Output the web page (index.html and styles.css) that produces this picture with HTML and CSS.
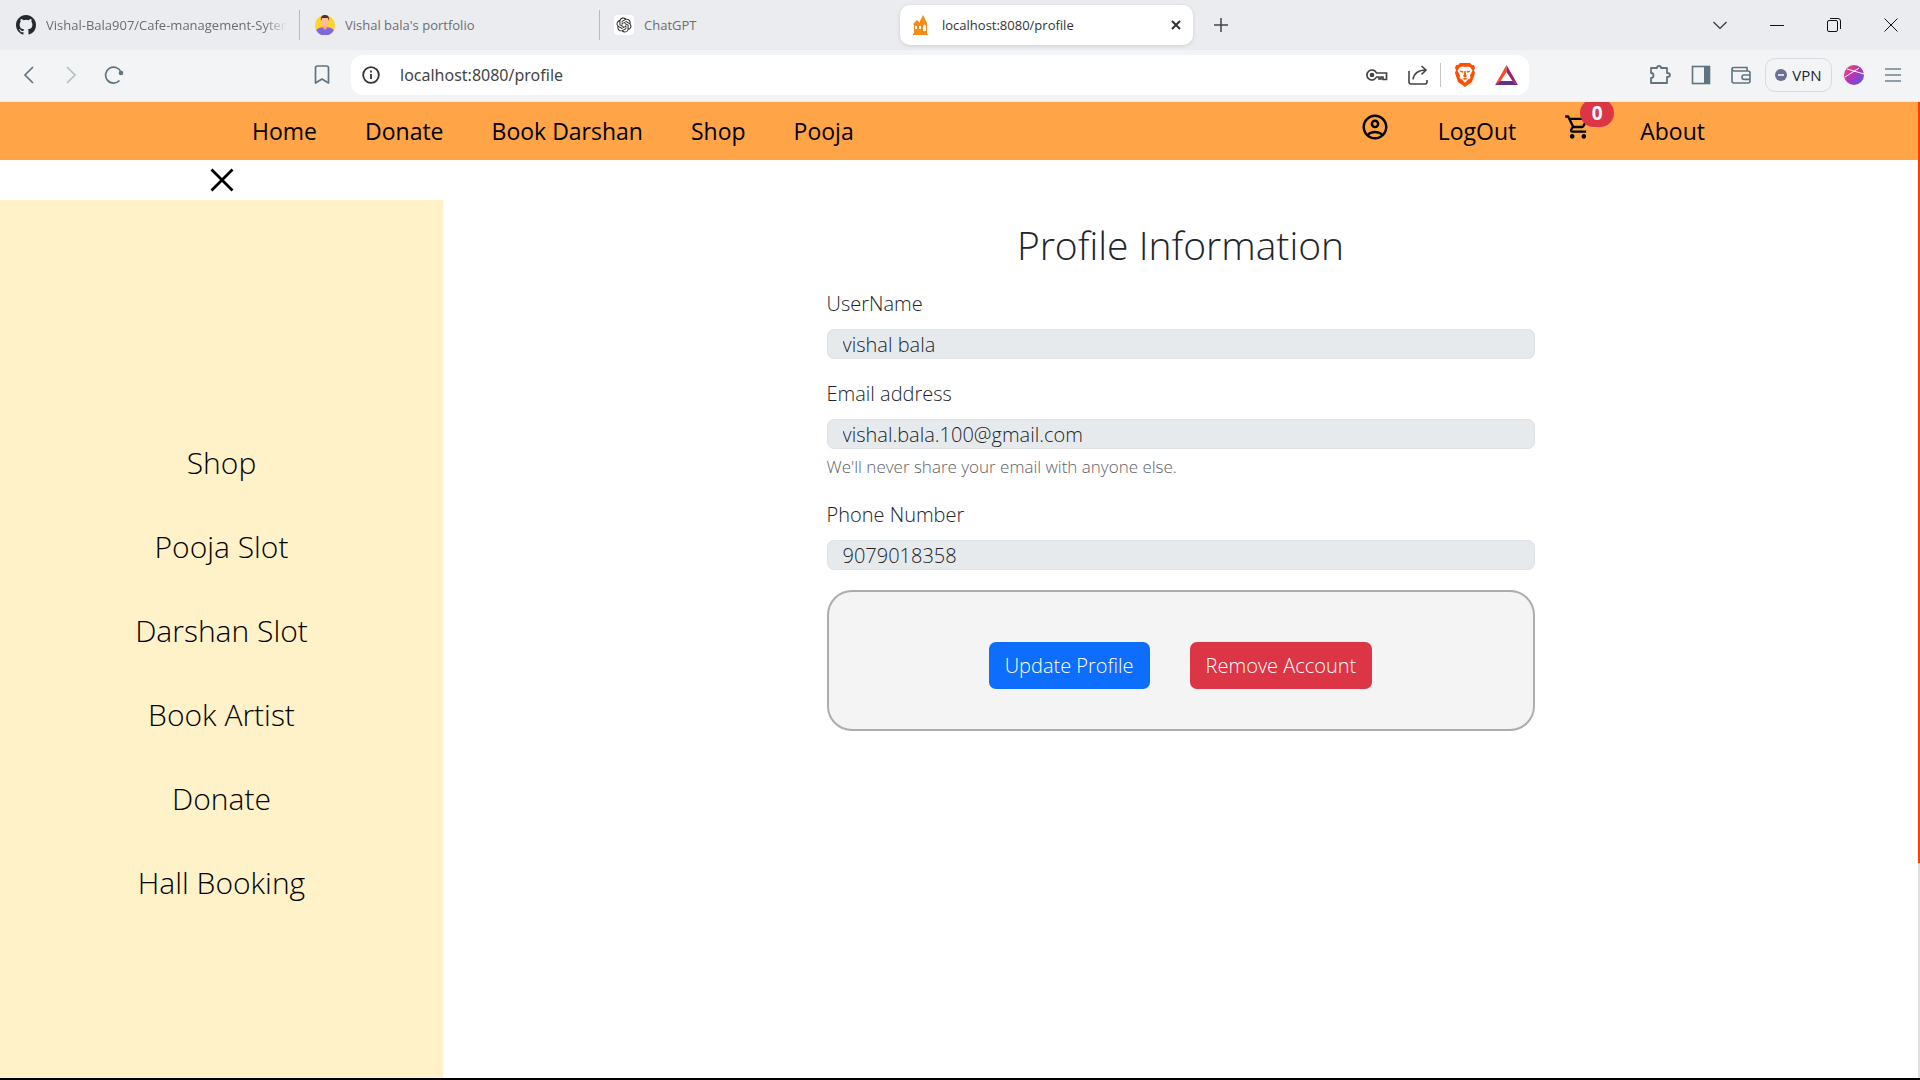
FILE: index.html
```html
<!DOCTYPE html>
<html lang="en">
<head>
<meta charset="utf-8">
<title>localhost:8080/profile</title>
<link rel="stylesheet" href="styles.css">
</head>
<body>
<div class="window">
  <header class="tabstrip">
    <div class="tab tab-clip">
      <svg class="tab-icon" viewBox="0 0 16 16"><path fill="#24292f" d="M8 0C3.58 0 0 3.58 0 8c0 3.54 2.29 6.53 5.47 7.59.4.07.55-.17.55-.38 0-.19-.01-.82-.01-1.49-2.01.37-2.53-.49-2.69-.94-.09-.23-.48-.94-.82-1.13-.28-.15-.68-.52-.01-.53.63-.01 1.08.58 1.23.82.72 1.21 1.87.87 2.33.66.07-.52.28-.87.51-1.07-1.78-.2-3.64-.89-3.64-3.95 0-.87.31-1.59.82-2.15-.08-.2-.36-1.02.08-2.12 0 0 .67-.21 2.2.82a7.4 7.4 0 0 1 4 0c1.53-1.04 2.2-.82 2.2-.82.44 1.1.16 1.92.08 2.12.51.56.82 1.27.82 2.15 0 3.07-1.87 3.75-3.65 3.95.29.25.54.73.54 1.48 0 1.07-.01 1.93-.01 2.2 0 .21.15.46.55.38A8 8 0 0 0 16 8c0-4.42-3.58-8-8-8z"/></svg>
      <span class="tab-title">Vishal-Bala907/Cafe-management-Sytem</span>
    </div>
    <div class="tab">
      <svg class="tab-icon" viewBox="0 0 20 20"><circle cx="10" cy="10" r="10" fill="#ffd32e"/><path fill="#8068d8" d="M1 15c2-2 5-3 9-3s7 1 9 3a10 10 0 0 1-18 0z"/><path fill="#f7a58a" d="M8 9h4v4l-2 2-2-2z"/><ellipse cx="10" cy="6.500" rx="3.500" ry="4.500" fill="#ffb9a0"/><path fill="#4b2e3d" d="M6 6c-1-5 2-6 4-6s5 1 4 6l-1-3H7z"/></svg>
      <span class="tab-title">Vishal bala's portfolio</span>
    </div>
    <div class="tab">
      <svg class="tab-icon" viewBox="0 0 20 20"><rect width="20" height="20" rx="4" fill="#fff"/><g transform="translate(2.500 2.500) scale(.625)"><path fill="#222" d="M22.282 9.821a5.985 5.985 0 0 0-.516-4.910 6.046 6.046 0 0 0-6.510-2.900A6.065 6.065 0 0 0 4.981 4.182a5.985 5.985 0 0 0-3.998 2.900 6.046 6.046 0 0 0 .743 7.097 5.980 5.980 0 0 0 .510 4.911 6.051 6.051 0 0 0 6.515 2.900A5.985 5.985 0 0 0 13.260 24a6.056 6.056 0 0 0 5.772-4.206 5.990 5.990 0 0 0 3.998-2.900 6.056 6.056 0 0 0-.748-7.073zM13.260 22.430a4.476 4.476 0 0 1-2.876-1.040l.141-.081 4.779-2.758a.795.795 0 0 0 .393-.681v-6.737l2.020 1.169a.071.071 0 0 1 .038.052v5.583a4.504 4.504 0 0 1-4.495 4.493zM3.600 18.304a4.471 4.471 0 0 1-.535-3.014l.142.085 4.783 2.759a.771.771 0 0 0 .780 0l5.843-3.369v2.332a.080.080 0 0 1-.033.062L9.740 19.950a4.500 4.500 0 0 1-6.140-1.646zM2.341 7.896a4.485 4.485 0 0 1 2.366-1.973V11.600a.766.766 0 0 0 .388.677l5.815 3.354-2.020 1.169a.076.076 0 0 1-.071 0l-4.830-2.787A4.504 4.504 0 0 1 2.341 7.872zm16.597 3.855-5.833-3.387L15.119 7.200a.076.076 0 0 1 .071 0l4.830 2.791a4.494 4.494 0 0 1-.676 8.105v-5.678a.790.790 0 0 0-.407-.667zm2.011-3.023-.142-.085-4.774-2.782a.776.776 0 0 0-.785 0L9.409 9.230V6.897a.066.066 0 0 1 .028-.061l4.830-2.787a4.499 4.499 0 0 1 6.680 4.660zm-12.640 4.135-2.020-1.164a.080.080 0 0 1-.038-.057V6.075a4.499 4.499 0 0 1 7.376-3.454l-.142.081-4.779 2.758a.795.795 0 0 0-.392.681zm1.097-2.365 2.602-1.500 2.607 1.500v2.999l-2.597 1.500-2.607-1.500z"/></g></svg>
      <span class="tab-title">ChatGPT</span>
    </div>
    <div class="tab tab-active">
      <svg class="tab-icon" viewBox="0 0 20 20"><path fill="#f48b16" d="M2 18v-8l-1-1 4-4 3 3V6l3-6 4 8v11h1v1H1v-1z"/><path fill="#fff" d="M3 11h2v3H3zm4 0h2v3H7zm4 0c1-2 2-2 3 0v5h-3z"/></svg>
      <span class="tab-title">localhost:8080/profile</span>
      <button class="icon-btn tab-close" aria-label="Close tab"><svg width="12" height="12" viewBox="0 0 12 12"><path d="M2 2l8 8M10 2l-8 8" stroke="#333" stroke-width="2"/></svg></button>
    </div>
    <button class="icon-btn new-tab" aria-label="New tab"><svg width="14" height="14" viewBox="0 0 14 14"><path d="M7 0v14M0 7h14" stroke="#444" stroke-width="1.500"/></svg></button>
    <div class="window-controls">
      <button class="icon-btn" aria-label="Search tabs"><svg width="14" height="14" viewBox="0 0 14 14"><path d="M.5 4 7 10.500 13.500 4" fill="none" stroke="#333" stroke-width="1.200"/></svg></button>
      <button class="icon-btn" aria-label="Minimize"><svg width="14" height="14" viewBox="0 0 14 14"><path d="M0 7.500h14" stroke="#111"/></svg></button>
      <button class="icon-btn" aria-label="Restore"><svg width="14" height="14" viewBox="0 0 14 14"><g fill="none" stroke="#111"><rect x=".5" y="2.500" width="10" height="11" rx="1.500"/><path d="M3 .5h8q2.500 0 2.500 2.500v8"/></g></svg></button>
      <button class="icon-btn" aria-label="Close window"><svg width="14" height="14" viewBox="0 0 14 14"><path d="M.5.5l13 13M13.500.5l-13 13" stroke="#111"/></svg></button>
    </div>
  </header>

  <div class="toolbar">
    <div class="toolbar-nav">
      <button class="icon-btn" aria-label="Back"><svg width="18" height="18" viewBox="0 0 18 18"><path d="M13 1 5 9l8 8" fill="none" stroke="#5f7480" stroke-width="1.700"/></svg></button>
      <button class="icon-btn" aria-label="Forward"><svg width="18" height="18" viewBox="0 0 18 18"><path d="M5 1l8 8-8 8" fill="none" stroke="#b4bfc5" stroke-width="1.700"/></svg></button>
      <button class="icon-btn" aria-label="Reload"><svg width="20" height="18" viewBox="0 0 20 18"><path d="M15.500 14.500A8 8 0 1 1 17 6" fill="none" stroke="#5f7480" stroke-width="1.700"/><circle cx="17" cy="7" r="2.300" fill="#5f7480"/></svg></button>
    </div>
    <button class="icon-btn bookmark" aria-label="Bookmark"><svg width="16" height="20" viewBox="0 0 16 20"><path d="M1.500 18V3q0-2 2-2h9q2 0 2 2v15L8 14z" fill="none" stroke="#5f7480" stroke-width="1.700" stroke-linejoin="round"/></svg></button>
    <div class="address">
      <svg width="18" height="18" viewBox="0 0 18 18"><circle cx="9" cy="9" r="7.800" fill="none" stroke="#333" stroke-width="1.800"/><path d="M9 8v5M9 4.500v2" stroke="#333" stroke-width="1.800"/></svg>
      <input class="address-input" type="text" value="localhost:8080/profile" aria-label="Address">
      <button class="icon-btn" aria-label="Passwords"><svg width="22" height="14" viewBox="0 0 22 14"><g fill="none" stroke="#444" stroke-width="1.700"><path d="M10.500 5a5 5 0 1 0 0 4H13v2h2V9h2v2.500h3.500V5z"/><circle cx="6" cy="7" r="1.500" fill="#444"/></g></svg></button>
      <button class="icon-btn share" aria-label="Share"><svg width="20" height="20" viewBox="0 0 20 20"><g fill="none" stroke="#444" stroke-width="1.600"><path d="M1 6v11q0 2 2 2h14q2 0 2-2v-2"/><path d="M5 14.500C6 8 10 5 18 5M13.500 1 18 5l-4.500 4.500"/></g></svg></button>
      <button class="icon-btn shield" aria-label="Shields"><svg width="20" height="24" viewBox="0 0 20 24"><path fill="#ff5000" d="M5 0h10l2 2 2 0 1 3-1 2 1 3-3 9-7 5-7-5L0 10l1-3-1-2 1-3 2 0z"/><path fill="#fff" d="M5 4l2.500-.5L10 4l2.500-.5L15 4l2.500 3.500-2.500 5 .5 2.500-2.500 1.500L10 20l-3-3.500L4.500 15l.5-2.500-2.500-5z"/><path fill="#ff5000" d="M4.500 7.500l4 .8-.8 1.400L5.500 9zM15.500 7.500l-4 .8.8 1.400L14.500 9zM9.300 8h1.400l.3 4 1.200 1L10 14.500 7.800 13l1.200-1zM7 16l3-1.200L13 16l-3 .800z"/></svg></button>
      <button class="icon-btn" aria-label="Rewards"><svg width="23" height="20" viewBox="0 0 23 20"><path fill="#ff4724" d="M11.500 0v7L5 17l-5 3z"/><path fill="#9e1f63" d="M11.500 0 23 20l-5.500-4-6-9z"/><path fill="#662d91" d="M0 20l5.500-4h12l5.500 4z"/></svg></button>
    </div>
    <div class="toolbar-actions">
      <button class="icon-btn" aria-label="Extensions"><svg width="22" height="22" viewBox="0 0 22 22"><path d="M2 4h6q0-2 2-2t2 2h6v5q3 0 3 2t-3 2v6H2v-5q2.500 0 2.500-2.500T2 9z" fill="none" stroke="#5f7480" stroke-width="1.800" stroke-linejoin="round"/></svg></button>
      <button class="icon-btn" aria-label="Side panel"><svg width="20" height="20" viewBox="0 0 20 20"><rect x="1.500" y="1.500" width="17" height="17" fill="none" stroke="#5f7480" stroke-width="1.600"/><path fill="#5f7480" d="M13 1h6v18h-6z"/></svg></button>
      <button class="icon-btn" aria-label="Wallet"><svg width="20" height="20" viewBox="0 0 20 20"><g fill="none" stroke="#5f7480" stroke-width="1.600"><path d="M16 6V2.500H3Q1 2.500 1 4t2 2h14q2 0 2 2v8q0 2-2 2H3q-2 0-2-2V4"/><path d="M19 10h-6q-2 0-2 2.200t2 2.200h6"/></g></svg></button>
      <button class="vpn"><svg width="12" height="12" viewBox="0 0 12 12"><circle cx="6" cy="6" r="6" fill="#6b6f92"/><path d="M3 6h6" stroke="#fff" stroke-width="1.500"/></svg>VPN</button>
      <button class="icon-btn" aria-label="Profile"><svg width="20" height="20" viewBox="0 0 20 20"><defs><linearGradient id="orb" x1="0" y1="0" x2="1" y2="1"><stop offset="0" stop-color="#ff4a6a"/><stop offset=".5" stop-color="#b136b8"/><stop offset="1" stop-color="#4a5df0"/></linearGradient></defs><circle cx="10" cy="10" r="10" fill="url(#orb)"/><path d="M3 4l17 5M1 12 15 3" stroke="#fff"/></svg></button>
      <button class="icon-btn" aria-label="Menu"><svg width="18" height="14" viewBox="0 0 18 14"><path d="M1 1h16M1 7h16M1 13h16" stroke="#70838e" stroke-width="1.500"/></svg></button>
    </div>
  </div>

  <div class="viewport">
    <div class="page">
      <nav class="navbar" aria-label="Main">
        <div class="nav-left">
          <a href="#home">Home</a>
          <a href="#donate">Donate</a>
          <a href="#darshan">Book Darshan</a>
          <a href="#shop">Shop</a>
          <a href="#pooja">Pooja</a>
        </div>
        <div class="nav-right">
          <a class="nav-icon" href="#profile" aria-label="Profile"><svg width="30" height="30" viewBox="0 0 24 24"><path d="M12 2C6.480 2 2 6.480 2 12s4.480 10 10 10 10-4.480 10-10S17.520 2 12 2zM7.350 18.500C8.660 17.560 10.260 17 12 17s3.340.56 4.650 1.500C15.340 19.440 13.740 20 12 20s-3.340-.56-4.650-1.500zm10.790-1.380C16.450 15.800 14.320 15 12 15s-4.450.8-6.140 2.120C4.700 15.730 4 13.950 4 12c0-4.420 3.580-8 8-8s8 3.580 8 8c0 1.950-.7 3.730-1.860 5.120zM12 6c-1.930 0-3.500 1.570-3.500 3.500S10.070 13 12 13s3.500-1.570 3.500-3.500S13.930 6 12 6zm0 5c-.83 0-1.500-.67-1.500-1.500S11.170 8 12 8s1.500.67 1.500 1.500S12.830 11 12 11z"/></svg></a>
          <a href="#logout">LogOut</a>
          <a class="nav-icon" href="#cart" aria-label="Cart"><svg width="28" height="28" viewBox="0 0 24 24"><path d="M15.550 13c.75 0 1.410-.41 1.750-1.030l3.580-6.490A.996.996 0 0 0 20.010 4H5.210l-.94-2H1v2h2l3.600 7.590-1.350 2.440C4.520 15.370 5.480 17 7 17h12v-2H7l1.100-2h7.450zM6.160 6h12.150l-2.760 5H8.530L6.160 6zM7 18c-1.100 0-1.990.9-1.990 2S5.900 22 7 22s2-.9 2-2-.9-2-2-2zm10 0c-1.100 0-1.990.9-1.990 2s.89 2 1.990 2 2-.9 2-2-.9-2-2-2z"/></svg><span class="badge">0</span></a>
          <a href="#about">About</a>
        </div>
      </nav>
      <div class="content">
        <aside class="side">
          <button class="icon-btn side-close" aria-label="Close menu"><svg width="24" height="24" viewBox="0 0 24 24"><path d="M1.500 1.500l21 21M22.500 1.500l-21 21" stroke="#000" stroke-width="2.800"/></svg></button>
          <nav class="side-menu" aria-label="Services">
            <a href="#shop">Shop</a>
            <a href="#pooja-slot">Pooja Slot</a>
            <a href="#darshan-slot">Darshan Slot</a>
            <a href="#artist">Book Artist</a>
            <a href="#donate">Donate</a>
            <a href="#hall">Hall Booking</a>
          </nav>
        </aside>
        <main class="main">
          <form class="profile">
            <h1>Profile Information</h1>
            <div class="field">
              <label for="username">UserName</label>
              <input id="username" type="text" value="vishal bala" readonly>
            </div>
            <div class="field">
              <label for="email">Email address</label>
              <input id="email" type="email" value="vishal.bala.100@gmail.com" aria-describedby="email-help" readonly>
              <small id="email-help">We'll never share your email with anyone else.</small>
            </div>
            <div class="field">
              <label for="phone">Phone Number</label>
              <input id="phone" type="tel" value="9079018358" readonly>
            </div>
            <div class="actions">
              <button class="btn btn-primary" type="button">Update Profile</button>
              <button class="btn btn-danger" type="button">Remove Account</button>
            </div>
          </form>
        </main>
      </div>
    </div>
    <div class="scrollbar"><div class="scroll-thumb"></div></div>
  </div>
</div>
</body>
</html>
```
FILE: styles.css
```css
* { box-sizing: border-box; }

body {
  margin: 0;
  font-family: "Open Sans", "Noto Sans", sans-serif;
  font-weight: 300;
  color: #212529;
}

a { color: inherit; text-decoration: none; }
button, input { font: inherit; color: inherit; }
svg { display: block; flex: none; }

.window {
  display: flex;
  flex-direction: column;
  height: 100vh;
  overflow: hidden;
  border-bottom: 2px solid #000;
}

.icon-btn {
  display: flex;
  align-items: center;
  justify-content: center;
  padding: 0;
  border: 0;
  background: none;
}

/* Browser tabs */
.tabstrip {
  display: flex;
  align-items: center;
  flex: none;
  height: 50px;
  background: #ebecf0;
  font-size: 13px;
  font-weight: 400;
  color: #6b6c70;
}

.tab {
  display: flex;
  align-items: center;
  gap: 10px;
  width: 300px;
  height: 30px;
  padding: 0 15px;
  border-right: 1px solid #b9babd;
}

.tab:nth-child(3) { padding-left: 14px; border-color: transparent; }
.tab-icon { width: 20px; height: 20px; }
.tab-title { flex: 1; overflow: hidden; white-space: nowrap; }
.tab-clip { padding: 0 12px 0 16px; }
.tab-clip .tab-title { mask-image: linear-gradient(to right, #000 90%, transparent); }

.tab-active {
  width: 293px;
  height: 40px;
  padding: 0 10px 0 12px;
  border: 0;
  border-radius: 10px;
  background: #fff;
  box-shadow: 0 1px 4px #0000001f;
  color: #333;
}

.tab-close { width: 14px; height: 20px; }
.new-tab { width: 56px; height: 40px; }
.window-controls { display: flex; margin-left: auto; padding-right: 1px; }
.window-controls .icon-btn { width: 57px; height: 48px; }

/* Browser toolbar */
.toolbar {
  display: flex;
  align-items: center;
  flex: none;
  height: 52px;
  padding-bottom: 1px;
  border-bottom: 1px solid #e8eaec;
  background: #f3f4f6;
}

.toolbar-nav { display: flex; gap: 24px; padding-left: 20px; flex: 0 0 308px; }
.bookmark { flex: none; width: 28px; margin-right: 15px; }

.address {
  display: flex;
  align-items: center;
  gap: 20px;
  flex: 1;
  height: 40px;
  padding: 0 11px;
  border-radius: 12px;
  background: #fff;
}

.address-input {
  flex: 1;
  min-width: 0;
  padding: 0;
  border: 0;
  outline: 0;
  background: none;
  font-family: "Noto Sans", "Open Sans", sans-serif;
  font-size: 16px;
  font-weight: 400;
  color: #444;
}

.shield { height: 24px; padding-left: 14px; border-left: 1px solid #c4c4c4; }
.share { margin-right: -8px; }

.toolbar-actions { display: flex; align-items: center; gap: 20px; padding: 0 18px 0 120px; }

.vpn {
  display: flex;
  align-items: center;
  justify-content: center;
  gap: 5px;
  width: 67px;
  height: 34px;
  margin: 0 -8px 0 -6px;
  padding: 0;
  border: 1px solid #d3dbe0;
  border-radius: 10px;
  background: none;
  font-size: 15px;
  font-weight: 400;
}

/* Page */
.viewport { display: flex; flex: 1; min-height: 0; }
.page { display: flex; flex: 1; flex-direction: column; overflow: hidden; }

.scrollbar { width: 2px; background: #e0e0e0; }
.scroll-thumb { height: 78%; background: #ff3d00; }

.navbar {
  display: flex;
  align-items: center;
  justify-content: space-between;
  flex: none;
  height: 58px;
  padding: 0 213px 0 252px;
  background: #ffa447;
  color: #000;
  font-size: 23px;
  font-weight: 400;
}

.nav-left, .nav-right { display: flex; align-items: center; gap: 48px; }
.nav-icon { position: relative; padding-bottom: 8px; }

.badge {
  position: absolute;
  top: -14px;
  left: 16px;
  width: 34px;
  padding: 2px 0;
  border-radius: 14px;
  background: #dc3545;
  color: #fff;
  font-size: 19px;
  font-weight: 700;
  line-height: 24px;
  text-align: center;
}

.content { display: flex; flex: 1; min-height: 0; }
.side { display: flex; flex-direction: column; flex: 0 0 443px; }
.side-close { height: 40px; }

.side-menu {
  display: flex;
  flex: 1;
  flex-direction: column;
  align-items: center;
  justify-content: center;
  padding-top: 68px;
  background: #fff1c8;
  color: #000;
  font-size: 30px;
  line-height: 84px;
}

.main { flex: 1; }

.profile { display: flex; flex-direction: column; gap: 20px; width: 48%; margin: 0 auto; padding-top: 60px; }

h1 {
  margin: 0;
  font-size: 39px;
  font-weight: 300;
  line-height: 49px;
  text-align: center;
}

.field { display: flex; flex-direction: column; font-size: 20px; }
.field label { margin-bottom: 10px; line-height: 30px; }

.field input {
  height: 30px;
  padding: 0 15px;
  border: 1px solid #dee2e6;
  border-radius: 7px;
  outline: 0;
  background: #e7eaed;
}

.field small { margin-top: 4px; font-size: 17px; line-height: 27px; color: #5c6166; }

.actions {
  display: flex;
  justify-content: center;
  gap: 40px;
  padding: 50px 0 40px;
  border: 2px solid #adadad;
  border-radius: 25px;
  background: #f4f4f4;
}

.btn {
  height: 47px;
  padding: 0 16px;
  border: 0;
  border-radius: 7px;
  font-size: 20px;
  color: #fff;
}

.btn-primary { background: #0d6efd; }
.btn-danger { background: #dc3545; }
```
